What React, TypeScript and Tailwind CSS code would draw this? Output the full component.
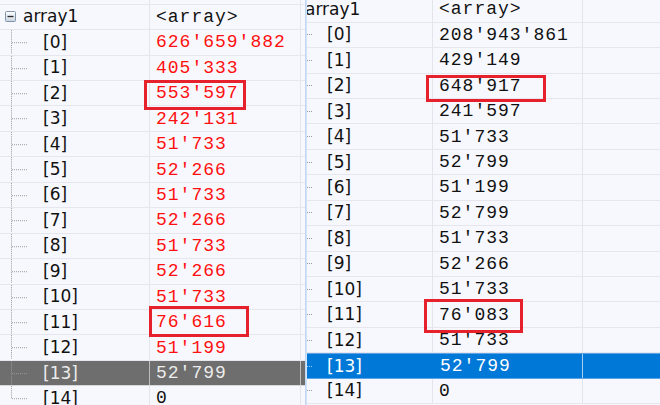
import React from "react";

const leftData: [string, string][] = [
  ["[0]", "626'659'882"],
  ["[1]", "405'333"],
  ["[2]", "553'597"],
  ["[3]", "242'131"],
  ["[4]", "51'733"],
  ["[5]", "52'266"],
  ["[6]", "51'733"],
  ["[7]", "52'266"],
  ["[8]", "51'733"],
  ["[9]", "52'266"],
  ["[10]", "51'733"],
  ["[11]", "76'616"],
  ["[12]", "51'199"],
  ["[13]", "52'799"],
  ["[14]", "0"],
];

const rightData: [string, string][] = [
  ["[0]", "208'943'861"],
  ["[1]", "429'149"],
  ["[2]", "648'917"],
  ["[3]", "241'597"],
  ["[4]", "51'733"],
  ["[5]", "52'799"],
  ["[6]", "51'199"],
  ["[7]", "52'799"],
  ["[8]", "51'733"],
  ["[9]", "52'266"],
  ["[10]", "51'733"],
  ["[11]", "76'083"],
  ["[12]", "51'733"],
  ["[13]", "52'799"],
  ["[14]", "0"],
];

const labelFont = { fontFamily: '"DejaVu Sans", "Liberation Sans", sans-serif' };
const monoFont = { fontFamily: '"Liberation Mono", "DejaVu Sans Mono", monospace' };

function TreeLines({ last }: { last?: boolean }) {
  return (
    <svg width="30" height="26" className="shrink-0 h-full" preserveAspectRatio="none" viewBox="0 0 30 26">
      <line x1="11.5" y1="0" x2="11.5" y2={last ? 13 : 26} stroke="#9a9a9a" strokeWidth="1" strokeDasharray="1 1" />
      <line x1="12" y1="13.5" x2="28" y2="13.5" stroke="#9a9a9a" strokeWidth="1" strokeDasharray="1 1" />
    </svg>
  );
}

function MinusBox() {
  return (
    <svg width="11" height="11" viewBox="0 0 11 11" className="shrink-0">
      <defs>
        <linearGradient id="mb" x1="0" y1="0" x2="0" y2="1">
          <stop offset="0" stopColor="#ffffff" />
          <stop offset="1" stopColor="#c9d3de" />
        </linearGradient>
      </defs>
      <rect x="0.5" y="0.5" width="10" height="10" rx="1" fill="url(#mb)" stroke="#7f93ab" />
      <line x1="2.5" y1="5.5" x2="8.5" y2="5.5" stroke="#2a2a2a" strokeWidth="1.3" />
    </svg>
  );
}

export default function App() {
  return (
    <div className="relative flex w-[660px] h-[405px] overflow-hidden bg-[#f7f8fd]">
      {/* LEFT PANEL */}
      <div className="w-[305px] h-full overflow-hidden flex flex-col shrink-0 bg-[#f7f8fd]">
        {/* partial row on top */}
        <div className="flex h-[4.7px] shrink-0 border-b border-[#e6e7ee]">
          <div className="w-[150px] border-r border-[#e4e5eb]" />
          <div className="w-[151px] border-r border-[#e4e5eb]" />
          <div className="flex-1" />
        </div>
        {/* array1 header row */}
        <div className="flex h-[25.45px] shrink-0 border-b border-[#e6e7ee] text-[#111]">
          <div className="w-[150px] border-r border-[#e4e5eb] flex items-center pl-[5px]">
            <MinusBox />
            <span className="ml-[7px] text-[17px] leading-none" style={labelFont}>array1</span>
          </div>
          <div className="w-[151px] border-r border-[#e4e5eb] flex items-center pl-[6px]">
            <span className="text-[18px] tracking-[1px] leading-none" style={monoFont}>&lt;array&gt;</span>
          </div>
          <div className="flex-1" />
        </div>
        {leftData.map(([idx, val], i) => {
          const sel = idx === "[13]";
          const black = idx === "[14]";
          return (
            <div
              key={idx}
              className={
                sel
                  ? "flex h-[25.45px] shrink-0 border-b border-[#d8d8dc] bg-[#6e6e6e] text-[#ececec]"
                  : "flex h-[25.45px] shrink-0 border-b border-[#e6e7ee] text-[#111]"
              }
            >
              <div className={sel ? "w-[150px] border-r border-[#bdbdbd] flex items-center" : "w-[150px] border-r border-[#e4e5eb] flex items-center"}>
                <TreeLines last={i === leftData.length - 1} />
                <span className="ml-[13px] text-[17px] leading-none" style={labelFont}>{idx}</span>
              </div>
              <div className={sel ? "w-[151px] border-r border-[#bdbdbd] flex items-center pl-[6px]" : "w-[151px] border-r border-[#e4e5eb] flex items-center pl-[6px]"}>
                <span
                  className={
                    sel
                      ? "text-[18px] tracking-[1px] leading-none text-[#ececec]"
                      : black
                      ? "text-[18px] tracking-[1px] leading-none text-[#111]"
                      : "text-[18px] tracking-[1px] leading-none text-[#ff1010]"
                  }
                  style={monoFont}
                >
                  {val}
                </span>
              </div>
              <div className="flex-1" />
            </div>
          );
        })}
      </div>

      {/* separator */}
      <div className="w-[2px] h-full shrink-0 bg-gradient-to-r from-[#b7d0f0] to-[#dde9f8]" />

      {/* RIGHT PANEL */}
      <div className="flex-1 h-full overflow-hidden flex flex-col bg-[#f7f8fd]">
        <div className="flex h-[25.45px] shrink-0 mt-[-2.8px] border-b border-[#e6e7ee] text-[#111]">
          <div className="w-[126px] border-r border-[#e4e5eb] flex items-center overflow-hidden">
            <span className="ml-[-2px] text-[17px] leading-none" style={labelFont}>array1</span>
          </div>
          <div className="w-[150px] border-r border-[#e4e5eb] flex items-center pl-[6px]">
            <span className="text-[18px] tracking-[1px] leading-none" style={monoFont}>&lt;array&gt;</span>
          </div>
          <div className="flex-1" />
        </div>
        {rightData.map(([idx, val]) => {
          const sel = idx === "[13]";
          return (
            <div
              key={idx}
              className={
                sel
                  ? "flex h-[25.45px] shrink-0 border-y border-[#5ea3e6] bg-[#0078d7] text-white"
                  : "flex h-[25.45px] shrink-0 border-b border-[#e6e7ee] text-[#111]"
              }
            >
              <div className={sel ? "w-[126px] flex items-center" : "w-[126px] border-r border-[#e4e5eb] flex items-center"}>
                <svg width="6" height="3" className="shrink-0" viewBox="0 0 6 3">
                  <line x1="0" y1="1.5" x2="5" y2="1.5" stroke={sel ? "#9cc8f0" : "#9a9a9a"} strokeWidth="1" strokeDasharray="1 1" />
                </svg>
                <span className="ml-[14px] text-[17px] leading-none" style={labelFont}>{idx}</span>
              </div>
              <div className={sel ? "w-[150px] border-r border-[#a9cdf0] flex items-center pl-[7px]" : "w-[150px] border-r border-[#e4e5eb] flex items-center pl-[6px]"}>
                <span className="text-[18px] tracking-[1px] leading-none" style={monoFont}>{val}</span>
              </div>
              <div className="flex-1" />
            </div>
          );
        })}
      </div>

      {/* highlight boxes */}
      <div className="absolute left-[144px] top-[80px] w-[102px] h-[30px] border-[3px] border-[#e5212b]" />
      <div className="absolute left-[149px] top-[306px] w-[100px] h-[31px] border-[3px] border-[#e5212b]" />
      <div className="absolute left-[426px] top-[75px] w-[120px] h-[27px] border-[3px] border-[#e5212b]" />
      <div className="absolute left-[424px] top-[299px] w-[99px] h-[34px] border-[3px] border-[#e5212b]" />
    </div>
  );
}
